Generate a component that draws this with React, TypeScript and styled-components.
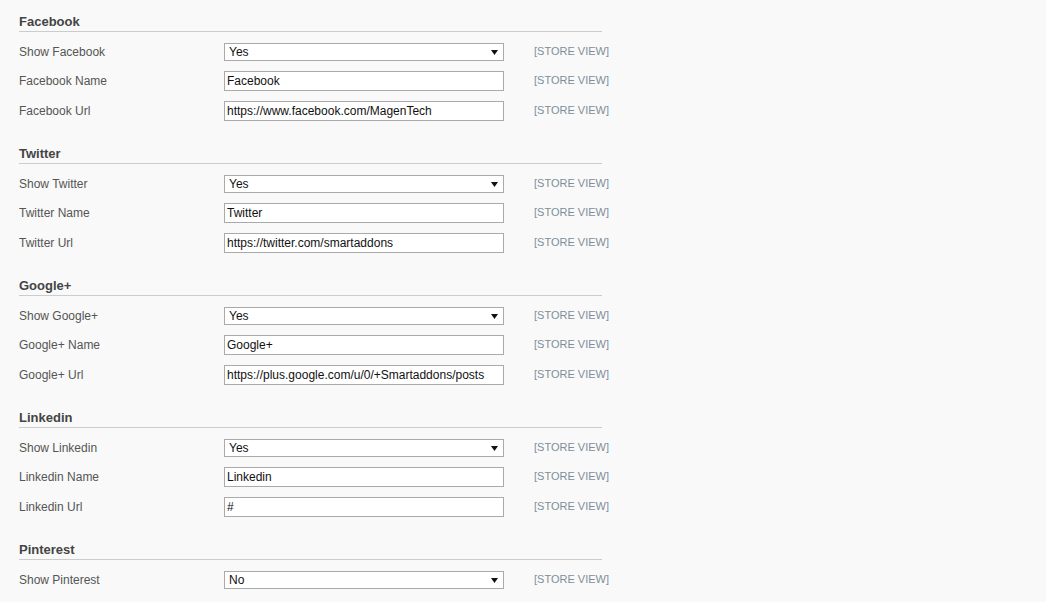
import React from "react";
import styled, { createGlobalStyle } from "styled-components";

const Global = createGlobalStyle`
  html, body {
    margin: 0;
    padding: 0;
    background: #f9f9f9;
    font-family: "Liberation Sans", Arial, sans-serif;
  }
`;

const Page = styled.div`
  display: flex;
  flex-direction: column;
  gap: 19px;
  padding: 13px 0 0 19px;
  width: 583px;
`;

const Section = styled.section`
  display: flex;
  flex-direction: column;
`;

const Heading = styled.h4`
  margin: 0 0 6px 0;
  font-size: 13px;
  line-height: 16px;
  font-weight: bold;
  color: #444;
  padding: 1px 0 1px 0;
  border-bottom: 1px solid #cccccc;
`;

const Row = styled.div<{ $h: number }>`
  display: grid;
  grid-template-columns: 205px 280px auto;
  align-items: center;
  height: ${(p) => p.$h}px;
`;

const Label = styled.label`
  font-size: 12px;
  color: #555;
  line-height: 15px;
`;

const Scope = styled.span`
  font-size: 11px;
  color: #7d8e99;
  padding: 0 0 2px 30px;
  line-height: 14px;
  white-space: nowrap;
`;

const TextInput = styled.div`
  box-sizing: border-box;
  height: 20px;
  border: 1px solid #aaaaaa;
  background: #fff;
  padding: 0 2px;
  font-size: 12px;
  line-height: 18px;
  color: #111;
  white-space: nowrap;
  overflow: hidden;
`;

const Select = styled.div`
  box-sizing: border-box;
  height: 18px;
  border: 1px solid #aaaaaa;
  background: #fff;
  padding: 0 5px 0 4px;
  display: flex;
  align-items: center;
  justify-content: space-between;
  font-size: 12px;
  color: #111;
`;

const Arrow = () => (
  <svg width="7" height="5" viewBox="0 0 7 5">
    <path d="M0 0 H7 L3.5 5 Z" fill="#111" />
  </svg>
);

type Field = { label: string; kind: "select" | "text"; value: string };

const sections: { title: string; fields: Field[] }[] = [
  {
    title: "Facebook",
    fields: [
      { label: "Show Facebook", kind: "select", value: "Yes" },
      { label: "Facebook Name", kind: "text", value: "Facebook" },
      { label: "Facebook Url", kind: "text", value: "https://www.facebook.com/MagenTech" },
    ],
  },
  {
    title: "Twitter",
    fields: [
      { label: "Show Twitter", kind: "select", value: "Yes" },
      { label: "Twitter Name", kind: "text", value: "Twitter" },
      { label: "Twitter Url", kind: "text", value: "https://twitter.com/smartaddons" },
    ],
  },
  {
    title: "Google+",
    fields: [
      { label: "Show Google+", kind: "select", value: "Yes" },
      { label: "Google+ Name", kind: "text", value: "Google+" },
      { label: "Google+ Url", kind: "text", value: "https://plus.google.com/u/0/+Smartaddons/posts" },
    ],
  },
  {
    title: "Linkedin",
    fields: [
      { label: "Show Linkedin", kind: "select", value: "Yes" },
      { label: "Linkedin Name", kind: "text", value: "Linkedin" },
      { label: "Linkedin Url", kind: "text", value: "#" },
    ],
  },
  {
    title: "Pinterest",
    fields: [{ label: "Show Pinterest", kind: "select", value: "No" }],
  },
];

export default function App() {
  return (
    <>
      <Global />
      <Page>
        {sections.map((s) => (
          <Section key={s.title}>
            <Heading>{s.title}</Heading>
            {s.fields.map((f) => (
              <Row key={f.label} $h={f.kind === "select" ? 28 : 30}>
                <Label>{f.label}</Label>
                {f.kind === "select" ? (
                  <Select>
                    <span>{f.value}</span>
                    <Arrow />
                  </Select>
                ) : (
                  <TextInput>{f.value}</TextInput>
                )}
                <Scope>[STORE VIEW]</Scope>
              </Row>
            ))}
          </Section>
        ))}
      </Page>
    </>
  );
}
